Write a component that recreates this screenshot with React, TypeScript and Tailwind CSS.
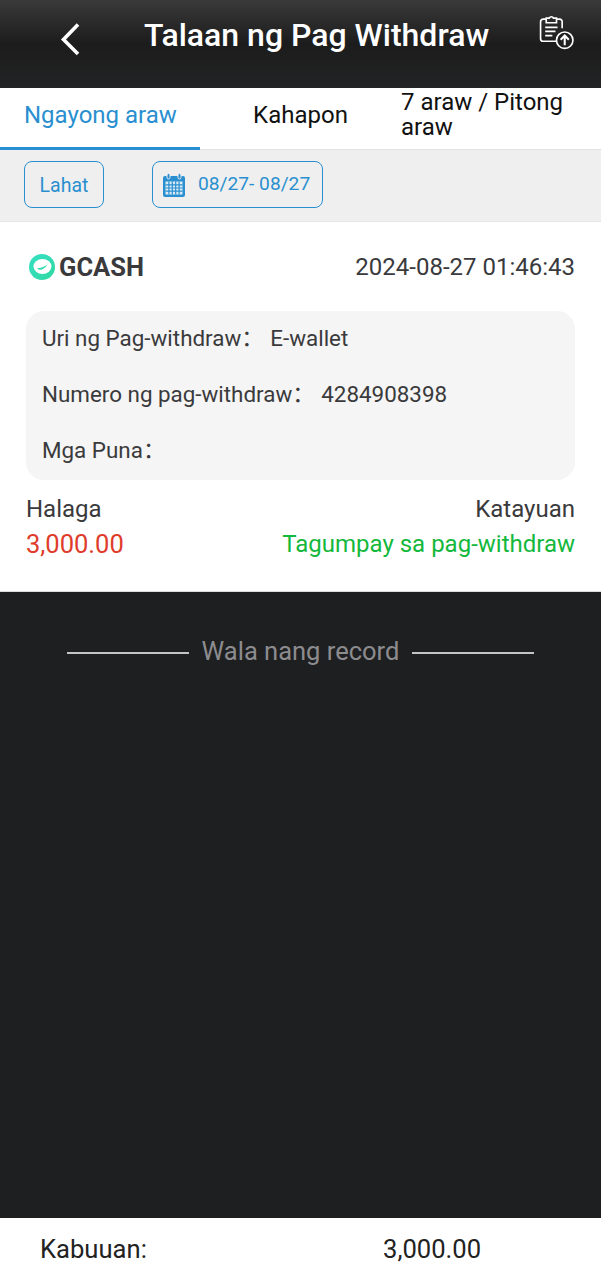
const font = "font-['Roboto','Noto_Sans_CJK_SC',sans-serif]";

function BackIcon() {
  return (
    <svg width="24" height="36" viewBox="0 0 24 36" fill="none" className="shrink-0 mt-[5px]">
      <path d="M19 3.5 L4.5 18.5 L19 33" stroke="#fff" strokeWidth="3.6" />
    </svg>
  );
}

function RecordIcon() {
  return (
    <svg width="37" height="37" viewBox="0 0 36 36" fill="none" stroke="#fff" strokeWidth="1.6" className="shrink-0 -mt-[1px]">
      <path d="M20 25.5 H5 a2.5 2.5 0 0 1 -2.5 -2.5 V6.5 A2.5 2.5 0 0 1 5 4 h3 M18 4 h3 a2.5 2.5 0 0 1 2.5 2.5 V13" />
      <path d="M8 3 h3 a2.2 2.2 0 0 1 4 0 h3 v4.5 H8 Z" />
      <path d="M7 12 H19 M7 16 H17 M7 20 H14" strokeWidth="1.8" />
      <circle cx="26" cy="24.5" r="8" fill="#1f1f1f" />
      <path d="M26 29.5 V20 M22 24 L26 20 L30 24" strokeWidth="2" />
    </svg>
  );
}

function CalendarIcon() {
  return (
    <svg width="22" height="24" viewBox="0 0 22 24" className="shrink-0">
      <path d="M0 5 a2 2 0 0 1 2 -2 h18 a2 2 0 0 1 2 2 v17 a2 2 0 0 1 -2 2 H2 a2 2 0 0 1 -2 -2 Z" fill="#2a8fd0" />
      <rect x="4" y="0.5" width="3" height="5.5" rx="1.5" fill="#2a8fd0" stroke="#efefef" strokeWidth="1" />
      <rect x="15" y="0.5" width="3" height="5.5" rx="1.5" fill="#2a8fd0" stroke="#efefef" strokeWidth="1" />
      <path d="M2.5 8.5 h17 v13 h-17 Z" fill="#dbeaf5" />
      <path d="M2.5 11.8 h17 M2.5 15 h17 M2.5 18.2 h17 M5.9 8.5 v13 M9.3 8.5 v13 M12.7 8.5 v13 M16.1 8.5 v13" stroke="#2a8fd0" strokeWidth="1.2" />
    </svg>
  );
}

function GcashLogo() {
  return (
    <svg width="26" height="26" viewBox="0 0 26 26" className="shrink-0">
      <defs>
        <linearGradient id="gc" x1="0" y1="0" x2="1" y2="1">
          <stop offset="0" stopColor="#36e0c4" />
          <stop offset="1" stopColor="#2fd8a0" />
        </linearGradient>
      </defs>
      <circle cx="13" cy="13" r="13" fill="url(#gc)" />
      <ellipse cx="13.5" cy="12.5" rx="9" ry="7.4" fill="#fff" />
      <path d="M8 13.5 C10 15 14 13.5 18.5 10.5 C16 14.5 12.5 16.5 9.5 15.5 Z" fill="#31dbb0" />
    </svg>
  );
}

function InfoRow({ label, value }: { label: string; value?: string }) {
  return (
    <div className="h-[56px] flex items-center text-[22.4px] text-[#3a3a3c]">
      <span>{label}</span>
      <span className="w-[29px] -translate-y-[2px] font-['Noto_Sans_CJK_SC',sans-serif]">：</span>
      {value && <span>{value}</span>}
    </div>
  );
}

export default function App() {
  return (
    <div className={`${font} w-[601px] h-[1280px] flex flex-col bg-[#1e1f21] overflow-hidden`}>
      <header className="h-[88px] shrink-0 bg-gradient-to-b from-[#3a3a3a] via-[#1c1c1c] via-50% to-[#232425] flex items-start pt-[16px] pl-[59px] pr-[26px]">
        <BackIcon />
        <h1 className="ml-[61px] flex-1 text-[32px] leading-[38px] font-medium text-white whitespace-nowrap">Talaan ng Pag Withdraw</h1>
        <RecordIcon />
      </header>

      <nav className="h-[62px] shrink-0 bg-white flex text-[24px]">
        <div className="w-[200px] flex items-center pl-[24px] pb-[6px] text-[#2a8fd0] border-b-[3px] border-[#2a8fd0]">Ngayong araw</div>
        <div className="w-[200px] flex items-center justify-center pb-[7px] pl-[1px] text-[#111] border-b-[1px] border-[#e2e2e2]">Kahapon</div>
        <div className="flex-1 flex items-center pl-[1px] pr-[20px] pb-[8px] text-[#111] leading-[25px] border-b-[1px] border-[#e2e2e2]">7 araw / Pitong araw</div>
      </nav>

      <div className="h-[72px] shrink-0 bg-[#efefef] border-b border-[#e6e6e6] flex items-center pl-[24px] pb-[3px] gap-[48px] text-[#2a8fd0]">
        <div className="w-[80px] h-[47px] pt-[3px] rounded-[8px] border border-[#2a8fd0] flex items-center justify-center text-[19.5px]">Lahat</div>
        <div className="w-[171px] h-[47px] pt-[1px] rounded-[8px] border border-[#2a8fd0] flex items-center pl-[10px] gap-[13px] text-[19.2px]">
          <CalendarIcon />
          <span className="whitespace-nowrap">08/27- 08/27</span>
        </div>
      </div>

      <section className="h-[370px] shrink-0 bg-white px-[26px] border-b border-[#dcdcdc]">
        <div className="h-[89px] flex items-center justify-between">
          <div className="flex items-center gap-[4px] pl-[3px]">
            <GcashLogo />
            <span className="text-[25.5px] font-bold text-[#3a3a3c] translate-y-[1px]">GCASH</span>
          </div>
          <span className="text-[24px] text-[#3a3a3c]">2024-08-27 01:46:43</span>
        </div>
        <div className="h-[169px] rounded-[18px] bg-[#f5f5f5] px-[16px]">
          <InfoRow label="Uri ng Pag-withdraw" value="E-wallet" />
          <InfoRow label="Numero ng pag-withdraw" value="4284908398" />
          <InfoRow label="Mga Puna" />
        </div>
        <div className="flex justify-between mt-[14px] text-[24px] leading-[30px] text-[#3a3a3c]">
          <span>Halaga</span>
          <span>Katayuan</span>
        </div>
        <div className="flex justify-between mt-[5px] text-[24px] leading-[30px]">
          <span className="text-[#e03c2b] text-[25.5px]">3,000.00</span>
          <span className="text-[#14b83c]">Tagumpay sa pag-withdraw</span>
        </div>
      </section>

      <main className="flex-1 bg-[#1e1f21] flex justify-center items-start pt-[44px]">
        <div className="flex items-center gap-[12.5px] text-[#8c8c8e] text-[25.5px] leading-[30px]">
          <span className="w-[122px] h-[2px] bg-[#c4c4c4] mt-[4px]" />
          <span>Wala nang record</span>
          <span className="w-[122px] h-[2px] bg-[#c4c4c4] mt-[4px]" />
        </div>
      </main>

      <footer className="h-[62px] shrink-0 bg-white flex items-center pl-[40px] text-[25.6px] text-[#222]">
        <span className="w-[343px]">Kabuuan:</span>
        <span>3,000.00</span>
      </footer>
    </div>
  );
}
